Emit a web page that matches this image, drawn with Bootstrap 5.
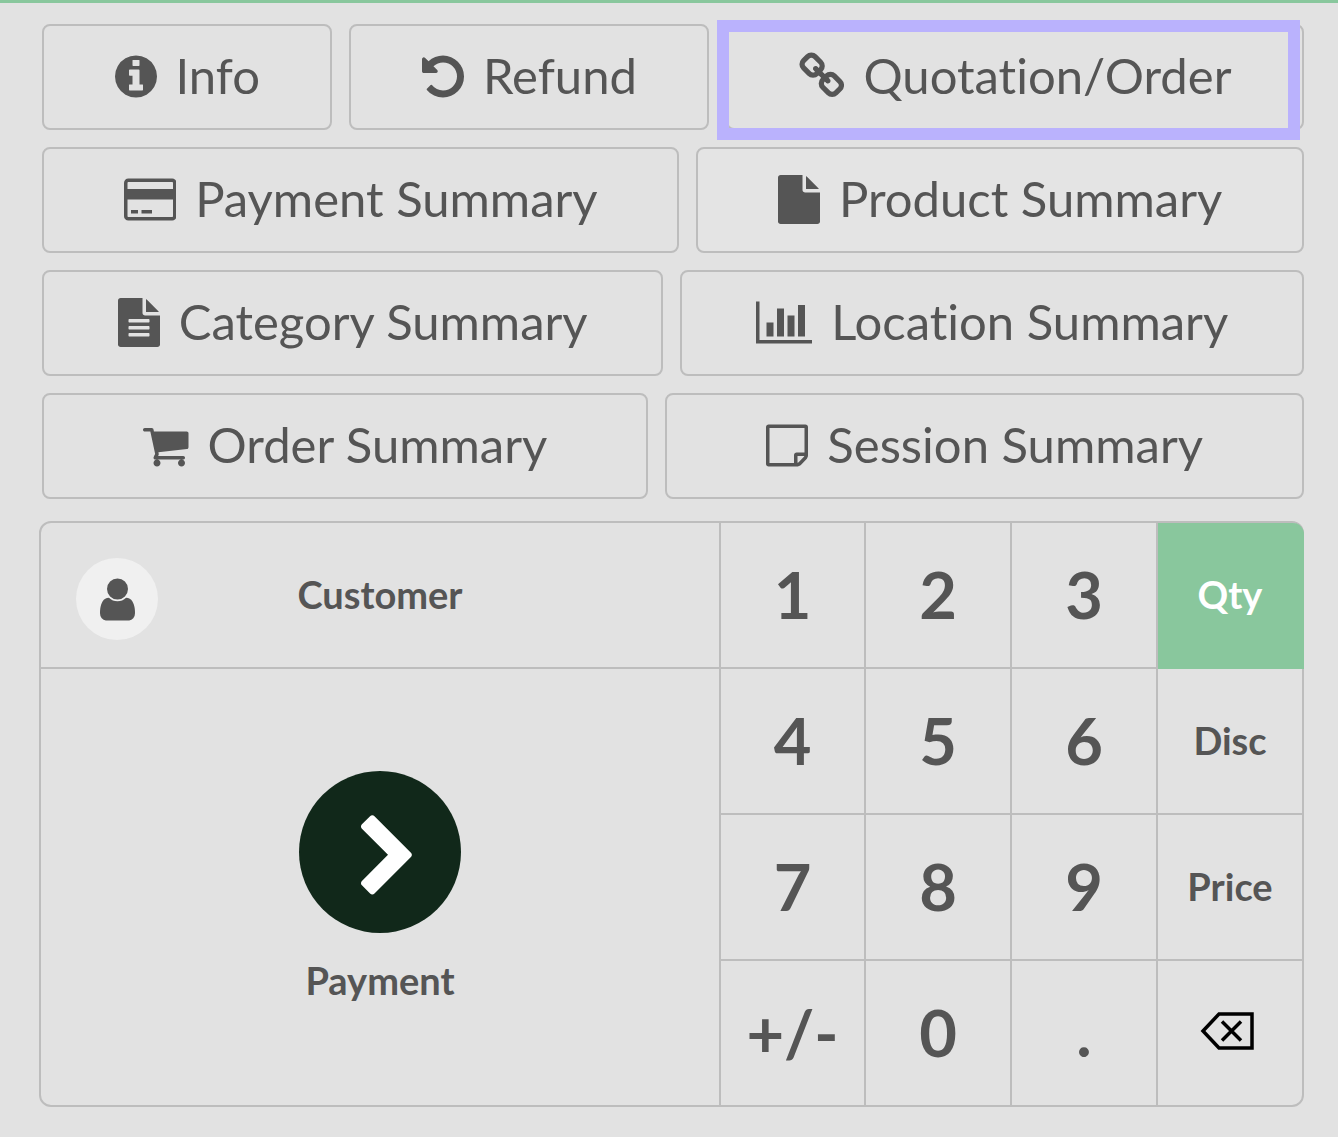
<!DOCTYPE html>
<html lang="en">
<head>
<meta charset="utf-8">
<meta name="viewport" content="width=device-width, initial-scale=1">
<title>Point of Sale</title>
<link href="https://cdn.jsdelivr.net/npm/bootstrap@5.3.0/dist/css/bootstrap.min.css" rel="stylesheet">
<style>
  :root { --pos-bg: #e2e2e2; --pos-line: #bdbdbd; --pos-ink: #555555; --pos-green: #89c79d; --pos-dark: #11281a; }
  body { background: var(--pos-bg); color: var(--pos-ink); font-family: Lato, "Liberation Sans", sans-serif; }
  button { font-variant-ligatures: none; }
  .pos-screen { border-top: 3px solid var(--pos-green); padding: 21px 34px 30px 39px; min-height: 100vh; }
  .pos-actions { gap: 17px; padding-left: 3px; margin-bottom: 22px; }
  .pos-line { gap: 17px; }
  .pos-action {
    --bs-btn-color: var(--pos-ink); --bs-btn-border-color: var(--pos-line);
    --bs-btn-hover-color: var(--pos-ink); --bs-btn-hover-border-color: var(--pos-line); --bs-btn-hover-bg: #ececec;
    height: 106px; padding: 0 0 2px; border-width: 2px; border-radius: 8px;
    font-size: 49px; line-height: 60px; gap: 19px;
  }
  .pos-action.is-hovered { --bs-btn-bg: #e4e4e4; }
  .pos-action svg { height: 49px; flex: none; }
  .pos-text { padding-bottom: 2px; }
  svg { fill: currentColor; }
  .pos-highlight { top: -6px; right: 2px; bottom: -12px; left: -11px; border: 12px solid #bab2fd; }

  .pos-pad {
    grid-template-columns: 1fr 145px 146px 146px 144px;
    grid-template-rows: repeat(3, 146px) 144px;
    border: 2px solid var(--pos-line); border-radius: 12px;
  }
  .pos-key {
    border: 0 solid var(--pos-line); border-width: 0 2px 2px 0; background: none; padding: 0 0 2px;
    color: var(--pos-ink); font-size: 65px; line-height: 78px; font-weight: 700;
  }
  .pos-label { font-size: 38px; line-height: 46px; }
  .pos-key.key-right { border-right-width: 0; }
  .pos-key.key-bottom { border-bottom-width: 0; }
  .pos-key.key-active { background: var(--pos-green); border-color: var(--pos-green); color: #fff; margin-right: -2px; border-right-width: 2px; border-top-right-radius: 11px; }
  .pos-customer { grid-template-columns: 82px 1fr 82px; padding: 0 35px; }
  .pos-avatar { width: 82px; height: 82px; background: #f0f0f0; }
  .pos-pay { grid-row: span 3; gap: 24px; padding: 0; }
  .pos-go { width: 162px; height: 162px; padding: 12px 0 0 16px; background: var(--pos-dark); color: #fff; }
</style>
<script src="https://cdn.jsdelivr.net/npm/bootstrap@5.3.0/dist/js/bootstrap.bundle.min.js"></script>
</head>
<body>
<main class="pos-screen">
  <div class="pos-actions d-flex flex-column">
    <div class="pos-line d-flex">
      <button type="button" class="pos-action btn flex-fill d-flex align-items-center justify-content-center">
        <svg viewBox="128 0 1536 1792" aria-hidden="true"><path d="M1152 1376v-160q0-14-9-23t-23-9h-96v-512q0-14-9-23t-23-9h-320q-14 0-23 9t-9 23v160q0 14 9 23t23 9h96v320h-96q-14 0-23 9t-9 23v160q0 14 9 23t23 9h448q14 0 23-9t9-23zm-128-896v-160q0-14-9-23t-23-9h-192q-14 0-23 9t-9 23v160q0 14 9 23t23 9h192q14 0 23-9t9-23zm640 416q0 209-103 385.5t-279.5 279.5-385.5 103-385.5-103-279.5-279.5-103-385.5 103-385.5 279.5-279.5 385.5-103 385.5 103 279.5 279.5 103 385.5z"/></svg>
        <span class="pos-text">Info</span>
      </button>
      <button type="button" class="pos-action btn flex-fill d-flex align-items-center justify-content-center">
        <svg viewBox="128 0 1536 1792" aria-hidden="true"><path d="M1664 896q0 156-61 298t-164 245-245 164-298 61q-172 0-327-72.5t-264-204.5q-7-10-6.5-22.5t8.5-20.5l137-138q10-9 25-9 16 2 23 12 73 95 179 147t225 52q104 0 198.5-40.5t163.5-109.5 109.5-163.5 40.5-198.5-40.5-198.5-109.5-163.5-163.5-109.5-198.5-40.5q-98 0-188 35.5t-160 101.5l137 138q31 30 14 69-17 40-59 40h-448q-26 0-45-19t-19-45v-448q0-42 40-59 39-17 69 14l130 129q107-101 244.5-156.5t284.5-55.5q156 0 298 61t245 164 164 245 61 298z"/></svg>
        <span class="pos-text">Refund</span>
      </button>
      <button type="button" class="pos-action btn flex-fill d-flex align-items-center justify-content-center position-relative">
        <svg viewBox="64 0 1664 1792" aria-hidden="true"><path d="M1520 1216q0-40-28-68l-208-208q-28-28-68-28-42 0-72 32 3 3 19 18.5t21.5 21.5 15 19 13 25.5 3.5 27.5q0 40-28 68t-68 28q-15 0-27.5-3.5t-25.5-13-19-15-21.5-21.5-18.5-19q-33 31-33 73 0 40 28 68l206 207q27 27 68 27 40 0 68-26l147-146q28-28 28-67zm-703-705q0-40-28-68l-206-207q-28-28-68-28-39 0-68 27l-147 146q-28 28-28 67 0 40 28 68l208 208q27 27 68 27 42 0 72-31-3-3-19-18.5t-21.5-21.5-15-19-13-25.5-3.5-27.5q0-40 28-68t68-28q15 0 27.5 3.5t25.5 13 19 15 21.5 21.5 18.5 19q33-31 33-73zm895 705q0 120-85 203l-147 146q-83 83-203 83-121 0-204-85l-206-207q-83-83-83-203 0-123 88-209l-88-88q-86 88-208 88-120 0-204-84l-208-208q-84-84-84-204t85-203l147-146q83-83 203-83 121 0 204 85l206 207q83 83 83 203 0 123-88 209l88 88q86-88 208-88 120 0 204 84l208 208q84 84 84 204z"/></svg>
        <span class="pos-text">Quotation/Order</span>
        <span class="pos-highlight position-absolute"></span>
      </button>
    </div>
    <div class="pos-line d-flex">
      <button type="button" class="pos-action btn flex-fill d-flex align-items-center justify-content-center">
        <svg viewBox="0 -128 1920 1792" aria-hidden="true"><path d="M1760 0q66 0 113 47t47 113v1216q0 66-47 113t-113 47h-1600q-66 0-113-47t-47-113v-1216q0-66 47-113t113-47h1600zM160 128q-13 0-22.500 9.500t-9.500 22.500v224h1664v-224q0-13-9.500-22.500t-22.500-9.500h-1600zM1760 1408q13 0 22.500-9.500t9.500-22.500v-608h-1664v608q0 13 9.500 22.500t22.500 9.500h1600zM256 1280v-128h256v128h-256zM640 1280v-128h384v128h-384z" fill-rule="evenodd"/></svg>
        <span class="pos-text">Payment Summary</span>
      </button>
      <button type="button" class="pos-action is-hovered btn flex-fill d-flex align-items-center justify-content-center">
        <svg viewBox="0 0 1536 1792" aria-hidden="true"><path d="M1024 512v-472q22 14 36 28l408 408q14 14 28 36h-472zM896 544q0 40 28 68t68 28h544v1056q0 40-28 68t-68 28h-1344q-40 0-68-28t-28-68v-1600q0-40 28-68t68-28h800v544z"/></svg>
        <span class="pos-text">Product Summary</span>
      </button>
    </div>
    <div class="pos-line d-flex">
      <button type="button" class="pos-action btn flex-fill d-flex align-items-center justify-content-center">
        <svg viewBox="0 0 1536 1792" aria-hidden="true"><path fill-rule="evenodd" d="M1024 512v-472q22 14 36 28l408 408q14 14 28 36h-472zM896 544q0 40 28 68t68 28h544v1056q0 40-28 68t-68 28h-1344q-40 0-68-28t-28-68v-1600q0-40 28-68t68-28h800v544zM1152 1376v-64q0-14-9-23t-23-9h-704q-14 0-23 9t-9 23v64q0 14 9 23t23 9h704q14 0 23-9t9-23zm0-256v-64q0-14-9-23t-23-9h-704q-14 0-23 9t-9 23v64q0 14 9 23t23 9h704q14 0 23-9t9-23zm0-256v-64q0-14-9-23t-23-9h-704q-14 0-23 9t-9 23v64q0 14 9 23t23 9h704q14 0 23-9t9-23z"/></svg>
        <span class="pos-text">Category Summary</span>
      </button>
      <button type="button" class="pos-action btn flex-fill d-flex align-items-center justify-content-center">
        <svg viewBox="0 -128 2048 1792" aria-hidden="true"><path d="M640 768v512h-256v-512h256zM1024 256v1024h-256v-1024h256zM2048 1408v128h-2048v-1536h128v1408h1920zM1408 512v768h-256v-768h256zM1792 128v1152h-256v-1152h256z"/></svg>
        <span class="pos-text">Location Summary</span>
      </button>
    </div>
    <div class="pos-line d-flex">
      <button type="button" class="pos-action btn flex-fill d-flex align-items-center justify-content-center">
        <svg viewBox="64 0 1664 1792" aria-hidden="true"><path d="M704 1536q0 52-38 90t-90 38-90-38-38-90 38-90 90-38 90 38 38 90zm896 0q0 52-38 90t-90 38-90-38-38-90 38-90 90-38 90 38 38 90zm128-1088v512q0 24-16.500 42.500t-40.500 21.500l-1044 122q13 60 13 70 0 16-24 64h920q26 0 45 19t19 45-19 45-45 19h-1024q-26 0-45-19t-19-45q0-11 8-31.500t16-36 21.500-40 15.500-29.500l-177-823h-204q-26 0-45-19t-19-45 19-45 45-19h256q16 0 28.500 6.500t19.500 15.500 13 24.500 8 26 5.500 29.500 4.500 26h1201q26 0 45 19t19 45z"/></svg>
        <span class="pos-text">Order Summary</span>
      </button>
      <button type="button" class="pos-action btn flex-fill d-flex align-items-center justify-content-center">
        <svg viewBox="128 0 1536 1792" aria-hidden="true"><path d="M1528 1280h-248v248q29-10 41-22l185-185q12-12 22-41zm-280-128h288v-896h-1280v1280h896v-288q0-40 28-68t68-28zm416-928v1024q0 40-20 88t-48 76l-184 184q-28 28-76 48t-88 20h-1024q-40 0-68-28t-28-68v-1344q0-40 28-68t68-28h1344q40 0 68 28t28 68z"/></svg>
        <span class="pos-text">Session Summary</span>
      </button>
    </div>
  </div>

  <div class="pos-pad d-grid">
    <button type="button" class="pos-key pos-label pos-customer d-grid align-items-center">
      <span class="pos-avatar rounded-circle d-flex align-items-center justify-content-center mt-2">
        <svg width="49" height="49" viewBox="0 0 1792 1792" aria-hidden="true"><path d="M1536 1399q0 109-62.500 187t-150.500 78h-854q-88 0-150.500-78t-62.500-187q0-85 8.500-160.500t31.500-152 58.500-131 94-89 134.500-34.500q131 128 313 128t313-128q76 0 134.500 34.500t94 89 58.500 131 31.500 152 8.500 160.500zm-256-887q0 159-112.500 271.500t-271.500 112.500-271.500-112.500-112.500-271.500 112.500-271.500 271.500-112.500 271.500 112.500 112.500 271.500z"/></svg>
      </span>
      <span class="pos-text">Customer</span>
    </button>
    <button type="button" class="pos-key">1</button>
    <button type="button" class="pos-key">2</button>
    <button type="button" class="pos-key">3</button>
    <button type="button" class="pos-key pos-label key-right key-active">Qty</button>

    <button type="button" class="pos-key pos-label pos-pay key-bottom d-flex flex-column align-items-center justify-content-center">
      <span class="pos-go rounded-circle d-flex align-items-center justify-content-center">
        <svg width="88" height="88" viewBox="0 0 1792 1792" aria-hidden="true"><path d="M1363 877l-742 742q-19 19-45 19t-45-19l-166-166q-19-19-19-45t19-45l531-531-531-531q-19-19-19-45t19-45l166-166q19-19 45-19t45 19l742 742q19 19 19 45t-19 45z"/></svg>
      </span>
      <span>Payment</span>
    </button>
    <button type="button" class="pos-key">4</button>
    <button type="button" class="pos-key">5</button>
    <button type="button" class="pos-key">6</button>
    <button type="button" class="pos-key pos-label key-right">Disc</button>

    <button type="button" class="pos-key">7</button>
    <button type="button" class="pos-key">8</button>
    <button type="button" class="pos-key">9</button>
    <button type="button" class="pos-key pos-label key-right">Price</button>

    <button type="button" class="pos-key key-bottom">+/-</button>
    <button type="button" class="pos-key key-bottom">0</button>
    <button type="button" class="pos-key key-bottom">.</button>
    <button type="button" class="pos-key key-right key-bottom d-flex align-items-center justify-content-center" aria-label="Backspace">
      <svg width="62" height="42" viewBox="0 0 62 42" aria-hidden="true"><path d="M4 20 20 3H53V37H20ZM23 10.500 42 29.500M42 10.500 23 29.500" fill="none" stroke="#000" stroke-width="3.500"/></svg>
    </button>
  </div>
</main>
</body>
</html>
